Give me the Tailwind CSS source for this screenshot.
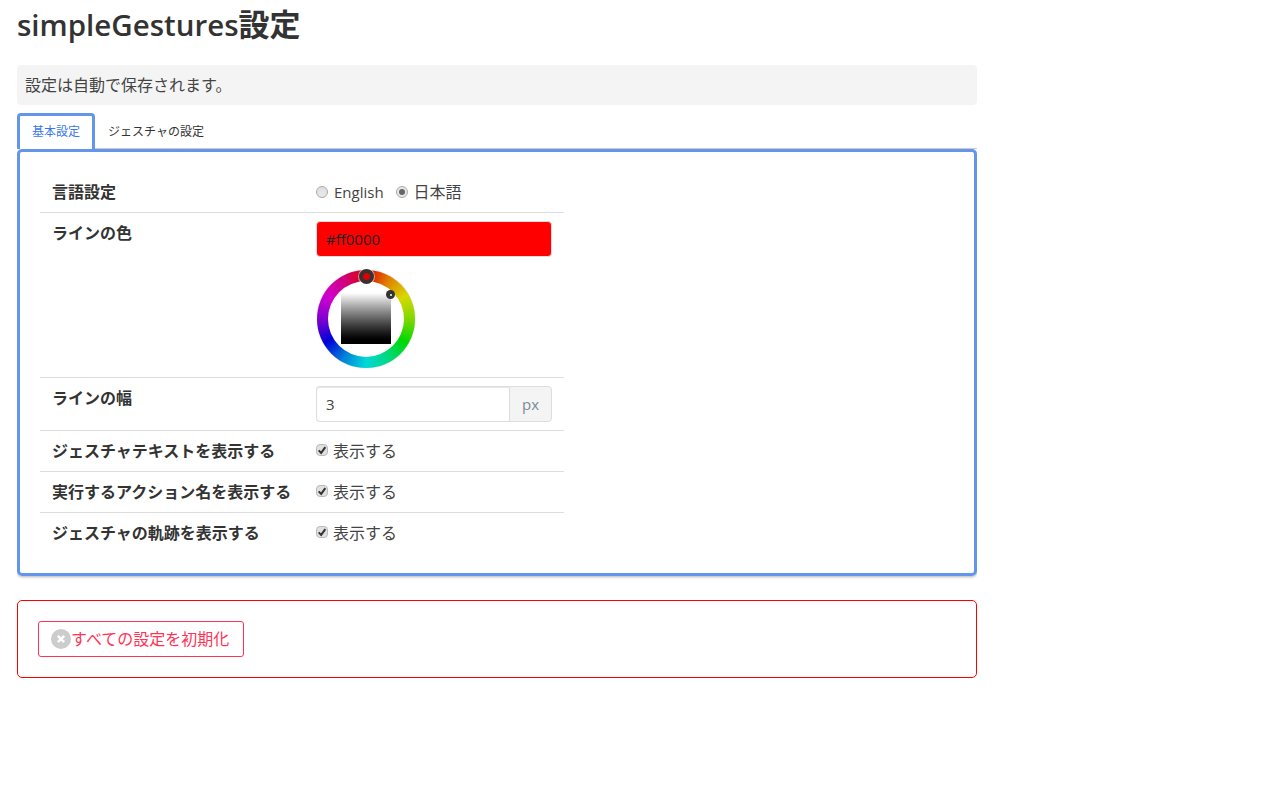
<!DOCTYPE html>
<html lang="ja">
<head>
    <meta charset="UTF-8">
    <title>simpleGestures設定</title>
    <script src="https://cdn.jsdelivr.net/npm/@tailwindcss/browser@4"></script>
</head>
<body class="bg-white text-[#333] font-['Open_Sans','Noto_Sans_CJK_JP',sans-serif]">
    <div class="w-[960px] ml-[17px] h-[800px] overflow-hidden">
        <h1 class="h-[65px] pt-[4px] text-[29.5px] leading-[40px] font-semibold">simpleGestures<span class="text-[31px]">設定</span></h1>
        <p class="h-10 pl-[8px] bg-[#f4f4f4] rounded text-[16px] leading-[41px] text-[#444]">設定は自動で保存されます。</p>

        <!-- tabs -->
        <div class="flex mt-2 h-9 border-b border-[#ccc] relative z-10">
            <div class="w-[78px] h-9 border-[3px] border-b-0 border-[#6495ed] rounded-t bg-white text-[#3b78e7] text-[12px] leading-[31px] text-center">基本設定</div>
            <div class="w-[122px] h-9 text-[12px] leading-[38px] text-center">ジェスチャの設定</div>
        </div>

        <!-- basic settings -->
        <div class="h-[427px] border-[3px] border-[#6495ed] rounded-[5px] shadow-[0_1px_3px_rgba(0,0,0,0.3)] pt-[21px] pl-5">
            <div class="w-[524px] text-[16px]">
                <div class="flex h-10 border-b border-[#ddd]">
                    <div class="w-[276px] pl-3 pt-[7px] font-semibold leading-6">言語設定</div>
                    <div class="flex items-center pb-[1px] leading-6">
                        <span class="w-3 h-3 rounded-full border border-[#aaa] bg-[#e8e8e8] shadow-inner"></span>
                        <span class="ml-[6px] text-[15px] text-[#444]">English</span>
                        <span class="ml-3 w-3 h-3 rounded-full border border-[#aaa] bg-[#e8e8e8] flex items-center justify-center"><span class="w-[6px] h-[6px] rounded-full bg-[#666]"></span></span>
                        <span class="ml-[6px] text-[#444]">日本語</span>
                    </div>
                </div>
                <div class="flex h-[165px] border-b border-[#ddd]">
                    <div class="w-[276px] pl-3 pt-2 font-semibold leading-6">ラインの色</div>
                    <div class="pt-2">
                        <div class="w-[236px] h-9 bg-[#ff0000] border border-[#ddd] rounded pl-[9px] leading-[34px] text-[15px] text-[#222]">#ff0000</div>
                        <div class="relative w-[98px] h-[98px] mt-[13px] ml-[1px] rounded-full bg-[conic-gradient(#e00000,#e08000,#d8d800,#80d800,#00d800,#00d880,#00d8d8,#0080d8,#0000d8,#8000d0,#d000d0,#d00080,#e00000)] shadow-[0_0_1px_rgba(0,0,0,0.4)]">
                            <div class="absolute left-[11px] top-[11px] w-[76px] h-[76px] rounded-full bg-white"></div>
                            <div class="absolute left-[24px] top-[23px] w-[50px] h-[51px] bg-gradient-to-b from-white to-black"></div>
                            <div class="absolute left-[42px] -top-[1px] w-[15px] h-[15px] rounded-full border-[4px] border-[#333] bg-[#e00000] shadow-[0_0_0_1px_rgba(255,255,255,0.5)]"></div>
                            <div class="absolute left-[69px] top-[20px] w-[9px] h-[9px] rounded-full bg-[#333] flex items-center justify-center"><span class="w-[2px] h-[2px] rounded-full bg-white"></span></div>
                        </div>
                    </div>
                </div>
                <div class="flex h-[53px] border-b border-[#ddd]">
                    <div class="w-[276px] pl-3 pt-2 font-semibold leading-6">ラインの幅</div>
                    <div class="pt-2 flex h-[44px]">
                        <div class="w-[193px] h-9 border border-[#ddd] border-r-0 rounded-l shadow-[inset_0_1px_1px_rgba(0,0,0,0.1)] pl-[9px] leading-[35px] text-[15px] text-[#444]">3</div>
                        <div class="w-[43px] h-9 border border-[#ddd] rounded-r bg-[#f4f4f4] text-center leading-[35px] text-[15px] text-[#7b8a99]">px</div>
                    </div>
                </div>
                <div class="flex items-center h-[41px] border-b border-[#ddd]">
                    <div class="w-[276px] pl-3 font-semibold">ジェスチャテキストを表示する</div>
                    <div class="flex items-center text-[#444]">
                        <span class="w-3 h-3 -mt-[2px] rounded-sm border border-[#bbb] bg-[#e0e0e0] flex items-center justify-center"><svg viewBox="0 0 12 12" class="w-[10px] h-[10px]"><path d="M2 6.5 L5 9.5 L10 2.5" fill="none" stroke="#333" stroke-width="2.4"/></svg></span>
                        <span class="ml-[5px]">表示する</span>
                    </div>
                </div>
                <div class="flex items-center h-[41px] border-b border-[#ddd]">
                    <div class="w-[276px] pl-3 font-semibold">実行するアクション名を表示する</div>
                    <div class="flex items-center text-[#444]">
                        <span class="w-3 h-3 -mt-[2px] rounded-sm border border-[#bbb] bg-[#e0e0e0] flex items-center justify-center"><svg viewBox="0 0 12 12" class="w-[10px] h-[10px]"><path d="M2 6.5 L5 9.5 L10 2.5" fill="none" stroke="#333" stroke-width="2.4"/></svg></span>
                        <span class="ml-[5px]">表示する</span>
                    </div>
                </div>
                <div class="flex items-center h-[41px] pb-[2px]">
                    <div class="w-[276px] pl-3 font-semibold">ジェスチャの軌跡を表示する</div>
                    <div class="flex items-center text-[#444]">
                        <span class="w-3 h-3 -mt-[2px] rounded-sm border border-[#bbb] bg-[#e0e0e0] flex items-center justify-center"><svg viewBox="0 0 12 12" class="w-[10px] h-[10px]"><path d="M2 6.5 L5 9.5 L10 2.5" fill="none" stroke="#333" stroke-width="2.4"/></svg></span>
                        <span class="ml-[5px]">表示する</span>
                    </div>
                </div>
            </div>
        </div>

        <!-- reset -->
        <div class="mt-6 h-[78px] border border-[#ff0000] rounded-[5px] pt-5 pl-5">
            <div class="inline-flex items-center w-[206px] h-9 border border-[#ff3355] rounded-[3px] pl-3 text-[16px] text-[#ff3355]">
                <svg viewBox="0 0 20 20" class="w-5 h-5 shrink-0"><circle cx="10" cy="10" r="10" fill="#ccc"/><path d="M6.8 6.8 L13.2 13.2 M13.2 6.8 L6.8 13.2" stroke="#fff" stroke-width="2.4"/></svg>
                <span>すべての設定を初期化</span>
            </div>
        </div>
    </div>
</body>
</html>
